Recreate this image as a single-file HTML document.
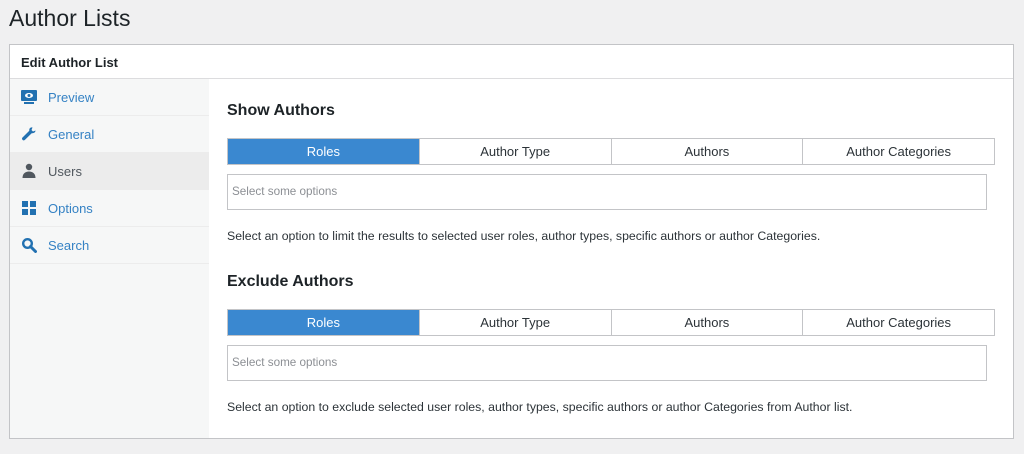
<!DOCTYPE html>
<html><head><style>
*{box-sizing:border-box;margin:0;padding:0}
body{width:1024px;height:454px;background:#f0f0f1;font-family:"Liberation Sans",sans-serif;color:#1d2327;position:relative;overflow:hidden}
h1{position:absolute;left:9px;top:5px;font-size:23px;font-weight:400;color:#1d2327}
.panel{position:absolute;left:9px;top:44px;width:1005px;height:395px;background:#fff;border:1px solid #c3c4c7}
.hdr{height:34px;border-bottom:1px solid #dcdcde;font-size:13px;font-weight:700;padding:10px 11px}
.side{position:absolute;left:0;top:34px;width:199px;bottom:0;background:#f6f7f7}
.item{height:37px;border-bottom:1px solid #ececec;display:flex;align-items:center;font-size:13px;color:#3582c4;padding-left:11px}
.item svg{width:16px;height:16px;margin-right:11px;fill:#2271b1}
.item.act{background:#ececec;color:#50575e}
.item.act svg{fill:#50575e}
.content{position:absolute;left:217px;top:34px;right:0}
h2{position:absolute;font-size:16px;font-weight:700;left:0}
.tabs{position:absolute;left:0;width:768px;height:27px;display:flex;border:1px solid #c3c4c7}
.tabs div{flex:1;border-left:1px solid #c3c4c7;text-align:center;font-size:13px;line-height:25px;color:#2c3338}
.tabs div:first-child{border-left:none;background:#3a88d0;color:#fff}
.inp{position:absolute;left:0;width:760px;height:36px;border:1px solid #c3c4c7;font-size:11.7px;color:#8c8f94;padding:10px 4px}
.help{position:absolute;left:0;font-size:12.3px;color:#2c3338}
</style></head><body>
<h1>Author Lists</h1>
<div class="panel">
<div class="hdr">Edit Author List</div>
<div class="side">
<div class="item"><svg viewBox="0 0 16 16"><rect x="0" y="1" width="16" height="11" rx="1"/><rect x="3" y="13" width="10" height="2"/><ellipse cx="8" cy="6.5" rx="4" ry="2.5" fill="#fff"/><circle cx="8" cy="6.5" r="1.5"/></svg>Preview</div>
<div class="item"><svg viewBox="0 0 16 16"><path d="M14.5 4.5l-2.5 1-1.5-1.5 1-2.5C9.5 1 8 2.5 8.3 4.7L1.5 11.5a1.7 1.7 0 002.4 2.4L10.7 7.2c2.2.3 3.8-1 3.8-2.7z"/></svg>General</div>
<div class="item act"><svg viewBox="0 0 16 16"><circle cx="8" cy="4" r="3.2"/><path d="M1.5 15c0-4 2.5-6.5 6.5-6.5s6.5 2.5 6.5 6.5z"/></svg>Users</div>
<div class="item"><svg viewBox="0 0 16 16"><rect x="1" y="1" width="6" height="6"/><rect x="9" y="1" width="6" height="6"/><rect x="1" y="9" width="6" height="6"/><rect x="9" y="9" width="6" height="6"/></svg>Options</div>
<div class="item"><svg viewBox="0 0 16 16"><circle cx="6.5" cy="6.5" r="4.3" fill="none" stroke="#2271b1" stroke-width="2.4"/><path d="M9.5 9.5l5 5" stroke="#2271b1" stroke-width="3" stroke-linecap="round"/></svg>Search</div>
</div>
<div class="content">
<h2 style="top:23px">Show Authors</h2>
<div class="tabs" style="top:59px"><div>Roles</div><div>Author Type</div><div>Authors</div><div>Author Categories</div></div>
<div class="inp" style="top:95px">Select some options</div>
<div class="help" style="top:150px">Select an option to limit the results to selected user roles, author types, specific authors or author Categories.</div>
<h2 style="top:194px">Exclude Authors</h2>
<div class="tabs" style="top:230px"><div>Roles</div><div>Author Type</div><div>Authors</div><div>Author Categories</div></div>
<div class="inp" style="top:266px">Select some options</div>
<div class="help" style="top:321px">Select an option to exclude selected user roles, author types, specific authors or author Categories from Author list.</div>
</div>
</div>
</body></html>
